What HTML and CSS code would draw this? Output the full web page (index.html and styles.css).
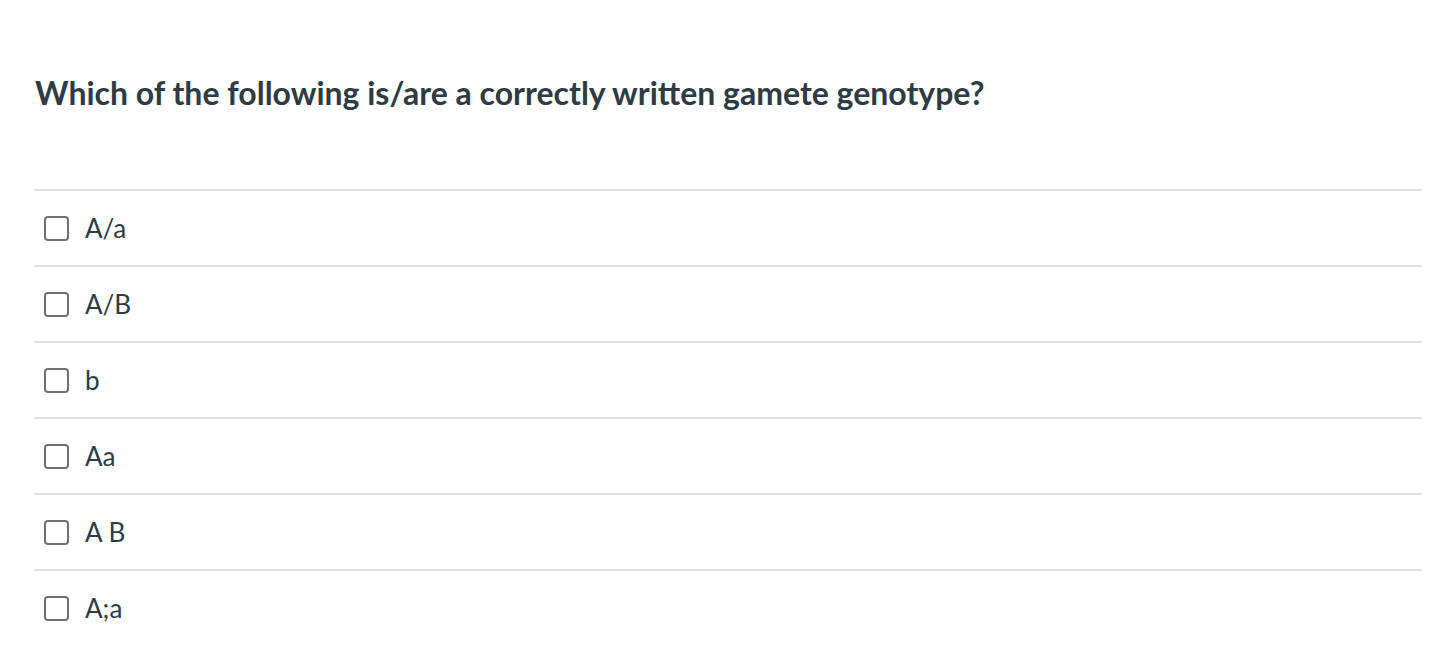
FILE: index.html
```html
<!DOCTYPE html>
<html lang="en">
<head>
<meta charset="utf-8">
<title>Quiz question</title>
<link rel="stylesheet" href="styles.css">
</head>
<body>
<main class="question">
  <h1 class="question-text">Which of the following is/are a correctly written gamete genotype?</h1>
  <ul class="answers">
    <li class="answer"><span class="box"></span><span class="label">A/a</span></li>
    <li class="answer"><span class="box"></span><span class="label">A/B</span></li>
    <li class="answer"><span class="box"></span><span class="label">b</span></li>
    <li class="answer"><span class="box"></span><span class="label">Aa</span></li>
    <li class="answer"><span class="box"></span><span class="label">A B</span></li>
    <li class="answer"><span class="box"></span><span class="label">A;a</span></li>
  </ul>
</main>
</body>
</html>
```
FILE: styles.css
```css
html, body {
  margin: 0;
  padding: 0;
  background: #ffffff;
}
body {
  font-family: Lato, "Liberation Sans", sans-serif;
  color: #2d3b45;
}
.question {
  padding: 75px 10px 0 34px;
}
.question-text {
  margin: 0 0 78px 1px;
  font-size: 32px;
  line-height: 36px;
  font-weight: 700;
}
.answers {
  list-style: none;
  margin: 0;
  padding: 0;
}
.answer {
  display: flex;
  align-items: center;
  height: 74px;
  border-top: 2px solid #dddddd;
  padding-left: 10px;
}
.box {
  width: 25px;
  height: 25px;
  box-sizing: border-box;
  border: 2px solid #707070;
  border-radius: 4px;
  flex: none;
}
.label {
  margin-left: 16px;
  font-size: 26px;
  line-height: 30px;
}
```
